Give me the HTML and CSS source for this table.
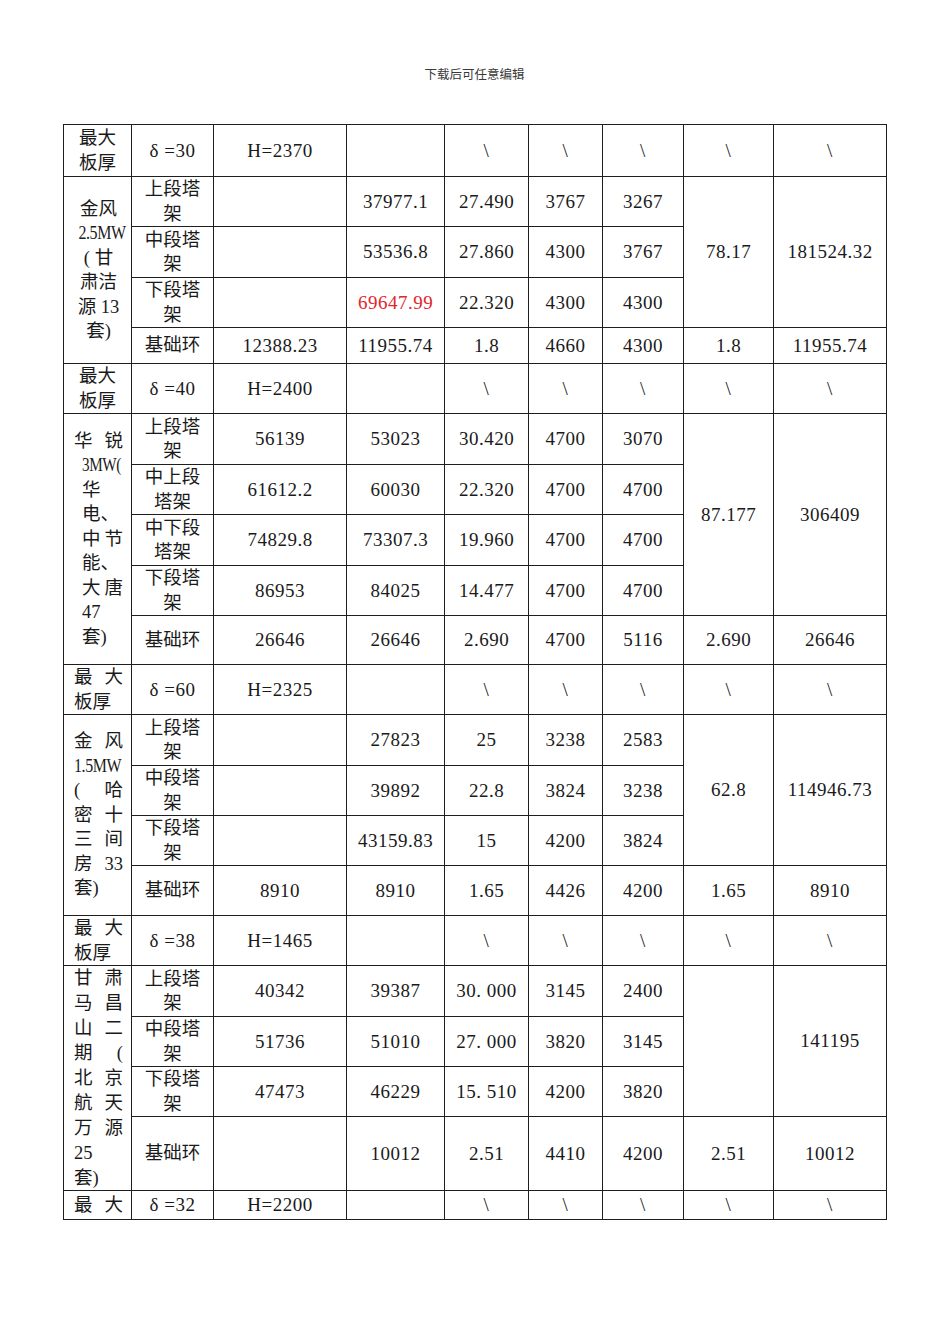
FILE: index.html
```html
<!DOCTYPE html>
<html lang="zh">
<head>
<meta charset="utf-8">
<title>塔架重量表</title>
<link rel="stylesheet" href="styles.css">
</head>
<body>
<div class="page">
  <div class="doc-head">下载后可任意编辑</div>
  <table class="grid">
    <colgroup>
      <col class="c1"><col class="c2"><col class="c3"><col class="c4"><col class="c5"><col class="c6"><col class="c7"><col class="c8"><col class="c9">
    </colgroup>
    <tbody>
      <tr class="r52">
        <td class="cn"><div class="ctr">最大<br>板厚</div></td>
        <td>δ =30</td><td>H=2370</td><td></td><td>\</td><td>\</td><td>\</td><td>\</td><td>\</td>
      </tr>
      <tr class="r50">
        <td rowspan="4" class="cn first">
          <div class="ctr">金风<br><span class="nar mid">2.5MW</span><br>(&nbsp;甘<br>肃洁<br>源 13<br>套)</div>
        </td>
        <td class="cn">上段塔<br>架</td><td></td><td>37977.1</td><td>27.490</td><td>3767</td><td>3267</td>
        <td rowspan="3">78.17</td><td rowspan="3">181524.32</td>
      </tr>
      <tr class="r51">
        <td class="cn">中段塔<br>架</td><td></td><td>53536.8</td><td>27.860</td><td>4300</td><td>3767</td>
      </tr>
      <tr class="r50">
        <td class="cn">下段塔<br>架</td><td></td><td class="red">69647.99</td><td>22.320</td><td>4300</td><td>4300</td>
      </tr>
      <tr class="r36">
        <td class="cn">基础环</td><td>12388.23</td><td>11955.74</td><td>1.8</td><td>4660</td><td>4300</td><td>1.8</td><td>11955.74</td>
      </tr>

      <tr class="r50">
        <td class="cn"><div class="ctr">最大<br>板厚</div></td>
        <td>δ =40</td><td>H=2400</td><td></td><td>\</td><td>\</td><td>\</td><td>\</td><td>\</td>
      </tr>
      <tr class="r51">
        <td rowspan="5" class="cn first">
          <div class="blk">
            <div class="sp"><span>华</span><span>锐</span></div>
            <div class="ind"><span class="nar nar3">3MW(</span></div>
            <div class="ind">华</div>
            <div class="ind">电、</div>
            <div class="sp ind"><span>中</span><span>节</span></div>
            <div class="ind">能、</div>
            <div class="sp ind"><span>大</span><span>唐</span></div>
            <div class="ind">47</div>
            <div class="ind">套)</div>
          </div>
        </td>
        <td class="cn">上段塔<br>架</td><td>56139</td><td>53023</td><td>30.420</td><td>4700</td><td>3070</td>
        <td rowspan="4">87.177</td><td rowspan="4">306409</td>
      </tr>
      <tr class="r50">
        <td class="cn">中上段<br>塔架</td><td>61612.2</td><td>60030</td><td>22.320</td><td>4700</td><td>4700</td>
      </tr>
      <tr class="r51">
        <td class="cn">中下段<br>塔架</td><td>74829.8</td><td>73307.3</td><td>19.960</td><td>4700</td><td>4700</td>
      </tr>
      <tr class="r50">
        <td class="cn">下段塔<br>架</td><td>86953</td><td>84025</td><td>14.477</td><td>4700</td><td>4700</td>
      </tr>
      <tr class="r49">
        <td class="cn">基础环</td><td>26646</td><td>26646</td><td>2.690</td><td>4700</td><td>5116</td><td>2.690</td><td>26646</td>
      </tr>

      <tr class="r50">
        <td class="cn first">
          <div class="blk">
            <div class="sp"><span>最</span><span>大</span></div>
            <div>板厚</div>
          </div>
        </td>
        <td>δ =60</td><td>H=2325</td><td></td><td>\</td><td>\</td><td>\</td><td>\</td><td>\</td>
      </tr>
      <tr class="r51">
        <td rowspan="4" class="cn first">
          <div class="blk">
            <div class="sp"><span>金</span><span>风</span></div>
            <div><span class="nar">1.5MW</span></div>
            <div class="sp"><span>(</span><span>哈</span></div>
            <div class="sp"><span>密</span><span>十</span></div>
            <div class="sp"><span>三</span><span>间</span></div>
            <div class="sp"><span>房</span><span>33</span></div>
            <div>套)</div>
          </div>
        </td>
        <td class="cn">上段塔<br>架</td><td></td><td>27823</td><td>25</td><td>3238</td><td>2583</td>
        <td rowspan="3">62.8</td><td rowspan="3">114946.73</td>
      </tr>
      <tr class="r50">
        <td class="cn">中段塔<br>架</td><td></td><td>39892</td><td>22.8</td><td>3824</td><td>3238</td>
      </tr>
      <tr class="r50">
        <td class="cn">下段塔<br>架</td><td></td><td>43159.83</td><td>15</td><td>4200</td><td>3824</td>
      </tr>
      <tr class="r50">
        <td class="cn">基础环</td><td>8910</td><td>8910</td><td>1.65</td><td>4426</td><td>4200</td><td>1.65</td><td>8910</td>
      </tr>

      <tr class="r50">
        <td class="cn first">
          <div class="blk">
            <div class="sp"><span>最</span><span>大</span></div>
            <div>板厚</div>
          </div>
        </td>
        <td>δ =38</td><td>H=1465</td><td></td><td>\</td><td>\</td><td>\</td><td>\</td><td>\</td>
      </tr>
      <tr class="r51">
        <td rowspan="4" class="cn first">
          <div class="blk tight">
            <div class="sp"><span>甘</span><span>肃</span></div>
            <div class="sp"><span>马</span><span>昌</span></div>
            <div class="sp"><span>山</span><span>二</span></div>
            <div class="sp"><span>期</span><span>(</span></div>
            <div class="sp"><span>北</span><span>京</span></div>
            <div class="sp"><span>航</span><span>天</span></div>
            <div class="sp"><span>万</span><span>源</span></div>
            <div>25</div>
            <div>套)</div>
          </div>
        </td>
        <td class="cn">上段塔<br>架</td><td>40342</td><td>39387</td><td>30. 000</td><td>3145</td><td>2400</td>
        <td rowspan="3"></td><td rowspan="3">141195</td>
      </tr>
      <tr class="r50">
        <td class="cn">中段塔<br>架</td><td>51736</td><td>51010</td><td>27. 000</td><td>3820</td><td>3145</td>
      </tr>
      <tr class="r50">
        <td class="cn">下段塔<br>架</td><td>47473</td><td>46229</td><td>15. 510</td><td>4200</td><td>3820</td>
      </tr>
      <tr class="r74">
        <td class="cn">基础环</td><td></td><td>10012</td><td>2.51</td><td>4410</td><td>4200</td><td>2.51</td><td>10012</td>
      </tr>

      <tr class="r29">
        <td class="cn first">
          <div class="blk">
            <div class="sp"><span>最</span><span>大</span></div>
          </div>
        </td>
        <td>δ =32</td><td>H=2200</td><td></td><td>\</td><td>\</td><td>\</td><td>\</td><td>\</td>
      </tr>
    </tbody>
  </table>
</div>
</body>
</html>
```

FILE: styles.css
```css
html, body {
  margin: 0;
  padding: 0;
  background: #ffffff;
}

.page {
  width: 950px;
  padding: 66px 0 0 63px;
  box-sizing: border-box;
}

.doc-head {
  width: 823px;
  text-align: center;
  font-family: "Noto Sans CJK SC", sans-serif;
  font-size: 12.5px;
  line-height: 16px;
  color: #3a3a3a;
}

.grid {
  margin-top: 42px;
  width: 823px;
  table-layout: fixed;
  border-collapse: collapse;
  font-family: "Liberation Serif", "Noto Sans CJK SC", serif;
  font-size: 19px;
  letter-spacing: 0.5px;
  color: #1a1a1a;
}

.c1 { width: 68px; }
.c2 { width: 82px; }
.c3 { width: 133px; }
.c4 { width: 98px; }
.c5 { width: 84px; }
.c6 { width: 74px; }
.c7 { width: 81px; }
.c8 { width: 90px; }
.c9 { width: 113px; }

.grid td {
  border: 1px solid #1e1e1e;
  padding: 0;
  text-align: center;
  vertical-align: middle;
  line-height: 24px;
  white-space: nowrap;
}

.grid td.cn {
  font-family: "Liberation Serif", "Noto Sans CJK SC", serif;
  font-size: 18.5px;
  letter-spacing: 0;
  line-height: 24.5px;
}

.grid td.first {
  padding: 0 8px 0 10px;
  text-align: left;
}

.ctr {
  text-align: center;
}

.blk {
  display: flex;
  flex-direction: column;
}

.blk.tight {
  line-height: 25px;
  margin: -2px 0;
}

.sp {
  display: flex;
  justify-content: space-between;
}

.ind {
  padding-left: 8px;
}

.nar {
  display: inline-block;
  font-size: 19px;
  letter-spacing: -0.5px;
  transform: scaleX(0.84);
  transform-origin: left center;
}

.nar.mid {
  transform-origin: center center;
}

.nar.nar3 {
  transform: scaleX(0.8);
}

.red {
  color: #e3262a;
}

.r29 { height: 29px; }
.r36 { height: 36px; }
.r49 { height: 49px; }
.r50 { height: 50px; }
.r51 { height: 51px; }
.r52 { height: 52px; }
.r74 { height: 74px; }
```
